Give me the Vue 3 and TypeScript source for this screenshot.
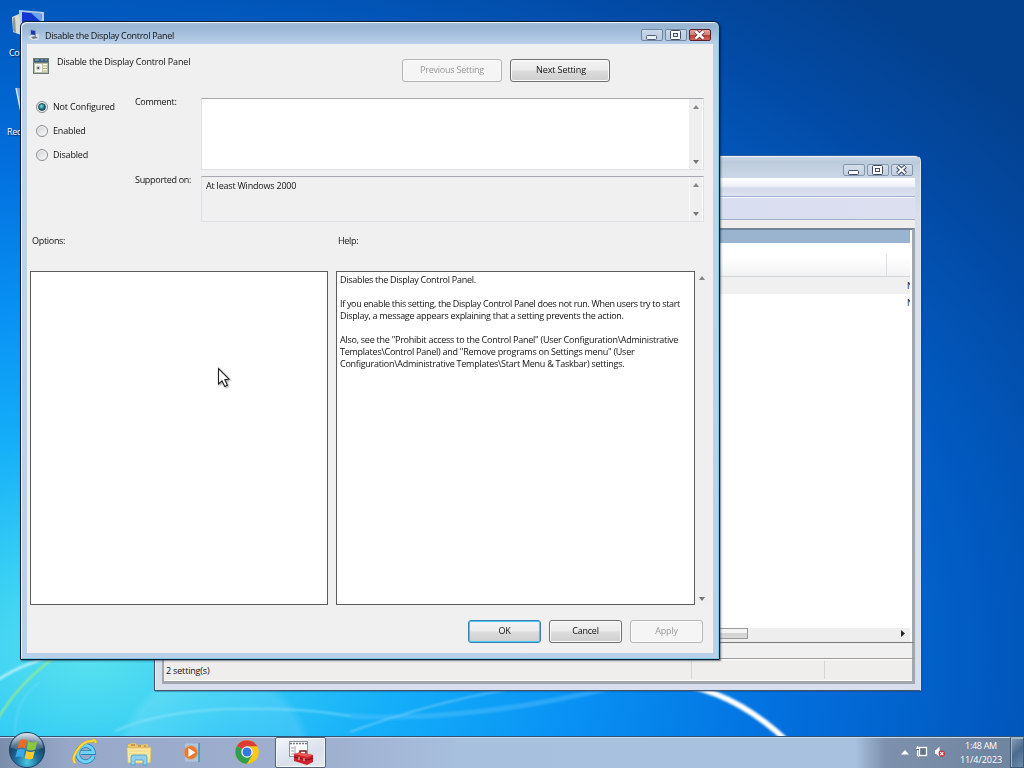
<script setup lang="ts">
import { ref } from 'vue'

type State = 'Not Configured' | 'Enabled' | 'Disabled'
const states: State[] = ['Not Configured', 'Enabled', 'Disabled']
const selected = ref<State>('Not Configured')

const helpLines: string[] = [
  'Disables the Display Control Panel.',
  '',
  'If you enable this setting, the Display Control Panel does not run. When users try to start',
  'Display, a message appears explaining that a setting prevents the action.',
  '',
  'Also, see the "Prohibit access to the Control Panel" (User Configuration\\Administrative',
  'Templates\\Control Panel) and "Remove programs on Settings menu" (User',
  'Configuration\\Administrative Templates\\Start Menu & Taskbar) settings.',
]
</script>

<template>
  <div class="desktop">
    <svg class="wallpaper" viewBox="0 0 1024 768" preserveAspectRatio="none">
      <defs>
        <radialGradient id="sky" gradientUnits="userSpaceOnUse" cx="0" cy="0" r="1" gradientTransform="translate(90 650) scale(1220 850)">
          <stop offset="0" stop-color="#5be2ee" />
          <stop offset="0.11" stop-color="#38cff4" />
          <stop offset="0.25" stop-color="#14aff9" />
          <stop offset="0.41" stop-color="#0890f4" />
          <stop offset="0.57" stop-color="#0270de" />
          <stop offset="0.73" stop-color="#015bc2" />
          <stop offset="0.87" stop-color="#024ba6" />
          <stop offset="1" stop-color="#03408d" />
        </radialGradient>
        <radialGradient id="orb" cx=".5" cy=".5" r=".5">
          <stop offset="0" stop-color="#fff" stop-opacity=".04" />
          <stop offset=".9" stop-color="#fff" stop-opacity=".12" />
          <stop offset="1" stop-color="#fff" stop-opacity="0" />
        </radialGradient>
        <filter id="soft"><feGaussianBlur stdDeviation="1.1" /></filter>
      </defs>
      <rect width="1024" height="768" fill="url(#sky)" />
      <circle cx="215" cy="765" r="100" fill="url(#orb)" />
      <g fill="none" filter="url(#soft)">
        <path d="M-5 682Q15 667 55 655" stroke="#d8f8fb" stroke-width="2.5" opacity=".8" />
        <path d="M-4 722Q18 682 62 652" stroke="#a4ee80" stroke-width="1.8" />
        <path d="M15 740Q13 700 40 682" stroke="#aeeefa" opacity=".4" />
        <path d="M115 731Q160 711 230 709T350 716" stroke="#a6ecff" stroke-width="2" opacity=".5" />
        <path d="M350 732Q430 703 505 690" stroke="#d5f5ff" stroke-width="1.2" opacity=".6" />
        <path d="M350 716Q470 722 610 688" stroke="#6bcaff" stroke-width="5" opacity=".35" />
        <path d="M690 686Q742 698 788 742" stroke="#fff" stroke-width="5.5" />
      </g>
    </svg>

    <div class="shortcut computer">
      <svg width="34" height="34" viewBox="0 0 34 34">
        <path d="M9 4L35 6 33 27 9 23z" fill="#b6cbe5" />
        <path d="M12 6L32 8 30 22 12 20z" fill="#1135cf" />
        <path d="M20 6L32 8 31 16z" fill="#6aa2ef" />
        <path d="M2 11L9 8 11 29 3 26z" fill="#d9dcd5" />
        <path d="M3 12L5 11 6 27 3 25z" fill="#92999b" />
      </svg>
      <span>Computer</span>
    </div>
    <div class="shortcut bin">
      <svg width="34" height="34" viewBox="0 0 34 34">
        <path d="M4 2H30L26 30H9z" fill="#8db8e8" opacity=".75" />
        <path d="M4 2L9 26" stroke="#d5eaff" stroke-width="1.4" />
      </svg>
      <span>Recycle Bin</span>
    </div>

    <section class="window console">
      <div class="caption">
        <div class="winbtns">
          <i class="wb"><svg viewBox="0 0 22 12"><rect x="5.5" y="6.5" width="10" height="4" rx="1" fill="#fff" stroke="#414d68" /></svg></i>
          <i class="wb"><svg viewBox="0 0 22 12"><rect x="5.5" y="1.5" width="10" height="9" rx="1" fill="#fff" stroke="#414d68" /><rect x="8.5" y="4.5" width="4" height="3" fill="#fff" stroke="#414d68" /></svg></i>
          <i class="wb"><svg viewBox="0 0 22 12"><path d="M6.5 2.3L14.5 9.6M14.5 2.3L6.5 9.6" stroke="#414d68" stroke-width="4.2" /><path d="M6.8 2.6L14.2 9.3M14.2 2.6L6.8 9.3" stroke="#fff" stroke-width="2" /></svg></i>
        </div>
      </div>
      <div class="menubar"></div>
      <div class="toolbar"></div>
      <div class="strip"></div>
      <div class="pane">
        <div class="band"></div>
        <div class="columns"><span></span></div>
        <div class="entry shaded"><span>No</span></div>
        <div class="entry"><span>No</span></div>
        <div class="blank"></div>
        <div class="hscroll">
          <div class="thumb"></div>
          <svg width="4" height="7" viewBox="0 0 4 7"><path d="M0 0L4 3.5 0 7z" fill="#222" /></svg>
        </div>
      </div>
      <div class="tabs"></div>
      <div class="status"><span>2 setting(s)</span><i></i><i></i></div>
    </section>

    <section class="window dialog">
      <header class="caption">
        <svg class="capicon" width="12" height="12" viewBox="0 0 12 12">
          <path d="M2 0L8 1 8 7 2 6z" fill="#93a5c6" />
          <path d="M3 1.2L7.2 2V6L3 5.2z" fill="#1b35b3" />
          <path d="M0 8L4 6 11 8 10 11 4 11z" fill="#dfe4e8" />
          <path d="M3 8L8 7 10 9 5 10z" fill="#6c7689" />
          <path d="M8 5H11V8H8z" fill="#d6dce2" />
        </svg>
        <span class="captext">Disable the Display Control Panel</span>
        <div class="winbtns">
          <i class="wb"><svg viewBox="0 0 22 12"><rect x="5.5" y="6.5" width="10" height="4" rx="1" fill="#e8eff5" stroke="#4d6077" /></svg></i>
          <i class="wb"><svg viewBox="0 0 22 12"><rect x="5.5" y="1.5" width="10" height="9" rx="1" fill="#fff" stroke="#414d68" /><rect x="8.5" y="4.5" width="4" height="3" fill="#dfe9f4" stroke="#414d68" /></svg></i>
          <i class="wb close"><svg viewBox="0 0 22 12"><path d="M6.5 2.3L14.5 9.6M14.5 2.3L6.5 9.6" stroke="#6e3035" stroke-width="4.2" /><path d="M6.5 2.3L14.5 9.6M14.5 2.3L6.5 9.6" stroke="#fff" stroke-width="2.6" /></svg></i>
        </div>
      </header>

      <div class="client">
        <div class="head">
          <svg class="polIcon" width="16" height="16" viewBox="0 0 16 16">
            <rect width="16" height="16" fill="#6b7a78" />
            <rect x="1" y="1" width="14" height="3" fill="#3d5f80" />
            <path d="M2 2H6M8 2H10M12 2H14" stroke="#8ebcbc" />
            <rect x="1" y="5" width="14" height="10" fill="#b8bda5" />
            <rect x="2" y="6" width="7" height="8" fill="#f8f8ee" />
            <circle cx="5.2" cy="10" r="2.4" fill="#cdd3c9" />
            <circle cx="5.2" cy="10" r="1" fill="#3c4d4d" />
            <rect x="10" y="6" width="4" height="8" fill="#fffde2" />
            <path d="M10 8H14M10 10.5H14M10 13H14" stroke="#9d9b64" stroke-width=".8" />
          </svg>
          <span class="title">Disable the Display Control Panel</span>
          <div class="nav">
            <button class="btn wide" disabled>Previous Setting</button>
            <button class="btn wide next">Next Setting</button>
          </div>
        </div>

        <div class="form">
          <div class="radios">
            <label v-for="s in states" :key="s" @click="selected = s">
              <span class="radio" :class="{ on: selected === s }"></span>{{ s }}
            </label>
          </div>
          <div class="labels"><span>Comment:</span><span>Supported on:</span></div>
          <div class="fields">
            <div class="field comment">
              <span></span>
              <div class="vs"><i class="up"></i><i class="down"></i></div>
            </div>
            <div class="field supported">
              <span>At least Windows 2000</span>
              <div class="vs"><i class="up"></i><i class="down"></i></div>
            </div>
          </div>
        </div>

        <div class="heads"><span>Options:</span><span>Help:</span></div>
        <div class="panels">
          <div class="box options"></div>
          <div class="box help">
            <p v-for="(line, i) in helpLines" :key="i" :class="{ tight: i === 2, loose: i > 4 }">{{ line }}</p>
          </div>
          <div class="vs bare"><i class="up"></i><i class="down"></i></div>
        </div>

        <div class="actions">
          <button class="btn primary">OK</button>
          <button class="btn">Cancel</button>
          <button class="btn" disabled>Apply</button>
        </div>
      </div>
    </section>

    <footer class="taskbar">
      <svg class="start" width="38" height="38" viewBox="0 0 38 38">
        <defs>
          <radialGradient id="ball" cx=".5" cy=".85" r=".8">
            <stop offset="0" stop-color="#4ccbe4" />
            <stop offset=".4" stop-color="#1c6f9c" />
            <stop offset=".75" stop-color="#1b4368" />
            <stop offset="1" stop-color="#6d93ad" />
          </radialGradient>
          <linearGradient id="gloss" x1="0" y1="0" x2="0" y2="1">
            <stop offset="0" stop-color="#fff" stop-opacity=".7" />
            <stop offset="1" stop-color="#fff" stop-opacity=".08" />
          </linearGradient>
        </defs>
        <circle cx="19" cy="19" r="17.6" fill="url(#ball)" stroke="#1f4160" />
        <path d="M3 17A16 15 0 0 1 35 17Q19 23 3 17z" fill="url(#gloss)" />
        <path d="M11.9 9.5Q15.5 7.2 19 9.5L17.4 17.6Q13.6 15.4 9.6 17.6z" fill="#ee6a24" />
        <path d="M20.2 10.2Q24.4 12.6 29.4 10.5L27.2 18.4Q22.7 20.6 18.6 18.2z" fill="#8cc63c" />
        <path d="M9.2 19Q13 16.8 17 19.1L15.3 26.6Q11.4 24.4 7.3 26.4z" fill="#3ea7e6" />
        <path d="M18.3 19.7Q22.3 22 26.8 19.9L24.8 27.4Q20.6 29.4 16.6 27.2z" fill="#fdc92b" />
      </svg>

      <div class="slot ie">
        <svg width="26" height="26" viewBox="0 0 26 26">
          <path d="M21.3 17A8 8 0 1 1 21.6 13.6H9" fill="none" stroke="#2584bd" stroke-width="4.6" />
          <path d="M21.3 17A8 8 0 1 1 21.6 13.6H9" fill="none" stroke="#6fd3f5" stroke-width="3" />
          <path d="M3.5 24Q-1 21 5 11.5T20 2Q24 0 23.5 4" fill="none" stroke="#d3a514" stroke-width="3" />
          <path d="M3.5 24Q-1 21 5 11.5T20 2Q24 0 23.5 4" fill="none" stroke="#fbdc48" stroke-width="2" />
        </svg>
      </div>
      <div class="slot explorer">
        <svg width="26" height="26" viewBox="0 0 26 26">
          <path d="M2 4L9 3 11 5 22 4V7H25V22H2z" fill="#e6c766" />
          <path d="M1 8H25L24 23H2z" fill="#f8e9a4" stroke="#d8bd64" stroke-width=".7" />
          <path d="M5 5H9M12 6H15M18 6H20" stroke="#cf5740" />
          <path d="M3 11H23M3 14H23" stroke="#eed883" />
          <path d="M5 25V17Q5 15 7 15H19Q21 15 21 17V25H17V20H9V25z" fill="#8fd0ed" stroke="#4d9dc8" stroke-width=".8" />
        </svg>
      </div>
      <div class="slot media">
        <svg width="22" height="22" viewBox="0 0 22 22">
          <rect x="3" y="1.5" width="14" height="18" fill="#bcd7e6" opacity=".6" />
          <path d="M17 1V20" stroke="#3c92b8" stroke-width="1.4" />
          <path d="M20 2V19" stroke="#75bed7" />
          <circle cx="8.8" cy="10.5" r="6.8" fill="#e8782c" stroke="#d8a17d" />
          <path d="M6.4 5.9L13.3 10.5 6.4 15.1z" fill="#fff" />
        </svg>
      </div>
      <div class="slot chrome">
        <svg width="24" height="24" viewBox="0 0 24 24">
          <circle cx="12" cy="12" r="11.8" fill="#fbc91b" />
          <path d="M12 12L1.8 6A11.8 11.8 0 0 1 22.3 6.2H12z" fill="#dc3d30" />
          <path d="M1.8 6.1A11.8 11.8 0 0 0 12 23.8L17.2 15 12 12z" fill="#30a04f" />
          <circle cx="12" cy="12" r="5.7" fill="#fff" />
          <circle cx="12" cy="12" r="4.5" fill="#3379e5" />
        </svg>
      </div>
      <div class="active">
        <svg width="26" height="26" viewBox="0 0 26 26">
          <rect x="1.5" y="1.5" width="18" height="15" fill="#fdfdfd" stroke="#8b939d" />
          <path d="M2 3.5H19" stroke="#6f7a88" stroke-width="1.4" stroke-dasharray="2 1" />
          <path d="M7 6V16M3 8H6M3 11H6M3 14H6" stroke="#a0a6af" />
          <path d="M12 14V11H18V15" fill="none" stroke="#6c1a1d" stroke-width="1.5" />
          <path d="M6 14L11 12.5 25 15V22L19 25 6 21z" fill="#c9242c" />
          <path d="M6 14L11 12.5 25 15 19 17z" fill="#ee5a57" />
          <path d="M6 17L19 20 25 18" fill="none" stroke="#7e0f17" />
          <path d="M11 17V20M16 18V21" stroke="#f5d8c8" />
        </svg>
      </div>

      <div class="tray">
        <svg width="8" height="5" viewBox="0 0 8 5"><path d="M0 4.5L4 0 8 4.5z" fill="#fff" /></svg>
        <svg width="12" height="12" viewBox="0 0 12 12"><rect x="3.5" y="1.5" width="7" height="8" fill="#63758e" stroke="#fff" stroke-width="1.3" /><path d="M0 2.5H3.4M1.6 0V9Q1.6 10.5 3.2 10.5" fill="none" stroke="#fff" stroke-width="1.3" /><path d="M.5 3.5H3" stroke="#26364a" stroke-width=".8" /></svg>
        <svg width="12" height="12" viewBox="0 0 12 12"><path d="M1 4H2L5.5 .5V10.5L2 8H1z" fill="#fff" /><circle cx="7.8" cy="7.6" r="3.2" fill="#d3323a" /><path d="M6.3 6.1L9.3 9.1M9.3 6.1L6.3 9.1" stroke="#fff" stroke-width="1.1" /></svg>
      </div>
      <div class="clock"><span>1:48 AM</span><span class="date">11/4/2023</span></div>
      <div class="peek"></div>
    </footer>

    <svg class="pointer" width="18" height="24" viewBox="0 0 18 24">
      <path d="M1.5 1.5V17L5 13.8 7.8 19.5 10.4 18.3 7.8 12.7 12 12.2z" fill="#fff" stroke="#222" stroke-width="1.1" />
    </svg>
  </div>
</template>

<style>
html,
body {
  margin: 0;
  overflow: hidden;
}
</style>

<style scoped>
.desktop {
  position: relative;
  width: 1024px;
  height: 768px;
  overflow: hidden;
  background: #0270de;
  font: 9px/12px 'Open Sans', 'Noto Sans', sans-serif;
  letter-spacing: -0.3px;
  color: #111;
  white-space: nowrap;
}
.desktop *,
.desktop *::before {
  box-sizing: border-box;
}
svg {
  display: block;
  flex: none;
}
.wallpaper {
  position: absolute;
  inset: 0;
  width: 1024px;
  height: 768px;
}
.shortcut {
  position: absolute;
  display: flex;
  flex-direction: column;
  width: 60px;
  color: #fff;
  text-shadow: 1px 1px 1px #002050;
}
.computer {
  left: 10px;
  top: 6px;
  gap: 7px;
}
.bin {
  left: 12px;
  top: 86px;
  gap: 6px;
}
.computer span {
  margin-left: -1px;
}
.bin span {
  margin-left: -5px;
}

/* window frames */
.window {
  position: absolute;
  display: flex;
  flex-direction: column;
}
.caption {
  display: flex;
  align-items: flex-start;
  flex: none;
}
.winbtns {
  display: flex;
  gap: 2px;
  margin-left: auto;
}
.wb {
  width: 22px;
  height: 12px;
  border: 1px solid #8496ae;
  border-radius: 2px;
  background: linear-gradient(#dfe7f1aa, #c0ccdc88);
}
.wb svg {
  width: 22px;
  height: 12px;
  margin: -1px;
}
.console {
  left: 154px;
  top: 155px;
  width: 767px;
  height: 536px;
  padding: 0 5px 6px 7px;
  border: 1px solid #43536b;
  border-top-color: #2d5f9e;
  border-right-color: #dfe6f1;
  border-radius: 6px 6px 0 0;
  background: linear-gradient(#cdd9e8 0, #bccbdc 6px, #ccd7e5 22px, #d8dfec 60px, #d8dfec);
  box-shadow: inset 1px 1px #edf3fa, 1px 1px 1px #1d3d6d66;
}
.console .caption {
  height: 22px;
  padding: 8px 2px 0 0;
}
.menubar {
  flex: none;
  height: 19px;
  border-bottom: 1px solid #a3b0cb;
  background: linear-gradient(#fff, #edf1f8 8px, #d4daea 10px, #dbe1f0);
}
.toolbar {
  flex: none;
  height: 23px;
  border-top: 1px solid #f7f9fd;
  border-bottom: 1px solid #a6b0c8;
  background: linear-gradient(90deg, #d3dbef, #dbdff0);
}
.strip {
  flex: none;
  height: 8px;
  background: #f0eeec;
}
.pane {
  flex: none;
  display: flex;
  flex-direction: column;
  height: 415px;
  padding-right: 2px;
  border-top: 2px solid #74859a;
  border-right: 3px solid #a1a6af;
  border-bottom: 1px solid #777;
  background: #fff;
}
.band {
  height: 13px;
  background: #9ab4d0;
}
.columns {
  display: flex;
  justify-content: flex-end;
  height: 34px;
  padding-top: 11px;
  border-bottom: 1px solid #d5d5d5;
  background: linear-gradient(#fff 45%, #f1f2f3);
}
.columns span {
  width: 24px;
  border-left: 1px solid #dcdee0;
}
.entry {
  display: flex;
  justify-content: flex-end;
  align-items: center;
  height: 17px;
}
.entry span {
  width: 3px;
  overflow: hidden;
}
.shaded {
  background: #f0f0f0;
}
.blank {
  flex: 1;
}
.hscroll {
  display: flex;
  align-items: center;
  height: 14px;
  padding: 0 5px 3px 0;
  background: #eee;
}
.thumb {
  width: 586px;
  height: 11px;
  margin-right: auto;
  border: 1px solid #999;
  background: linear-gradient(#f5f5f5 45%, #d2d2d2 50%, #dadada);
}
.tabs {
  flex: none;
  height: 16px;
  border-right: 3px solid #a1a6af;
  border-bottom: 1px solid #999;
  background: #f0f0f0;
}
.status {
  flex: 1;
  display: flex;
  align-items: center;
  padding-left: 2px;
  border: 3px solid #a1a6af;
  border-top: 0;
  border-left-width: 2px;
  background: #f0eeed;
  box-shadow: inset 0 1px #fff, inset 0 -1px #fff;
}
.status span {
  flex: 1;
  padding-top: 2px;
  letter-spacing: -0.18px;
}
.status i {
  width: 133px;
  height: 18px;
  border-left: 1px solid #d5d5d5;
}
.status i:last-child {
  width: 88px;
}

.dialog {
  left: 20px;
  top: 21px;
  width: 700px;
  height: 639px;
  padding: 0 6px 6px;
  border: 1px solid #0b1c30;
  border-radius: 6px 6px 0 0;
  background: linear-gradient(#a8c1dc, #97b4d2 4px, #b9d0e9 22px, #bdd4ec 130px, #b8d0ea);
  box-shadow: inset 1px 1px #eaf5fe, inset -1px -1px #7cc9e8, 1px 1px 2px #00102a88;
}
.dialog .caption {
  height: 22px;
  padding: 7px 2px 0 2px;
}
.captext {
  margin: 1px 0 0 5px;
}
.capicon {
  margin-left: -1px;
}
.dialog .wb {
  border-color: #71879f;
}
.dialog .wb.close {
  border-color: #5a2028;
  background: linear-gradient(#e2a59c, #d0837b 45%, #b83d34 50%, #d0685a);
}
.client {
  flex: 1;
  display: flex;
  flex-direction: column;
  padding: 0 9px 0 3px;
  background: #f0f0f0;
}

/* dialog content */
.head {
  display: flex;
  align-items: flex-start;
  height: 54px;
  padding: 14px 94px 0 3px;
}
.title {
  margin: -2px 0 0 8px;
  letter-spacing: -0.17px;
}
.nav {
  display: flex;
  gap: 8px;
  margin: 1px 0 0 auto;
}
.btn {
  width: 73px;
  height: 23px;
  padding: 0 0 2px;
  border: 1px solid #707070;
  border-radius: 3px;
  background: linear-gradient(#f3f3f3, #ebebeb 48%, #dcdcdc 52%, #cecece);
  box-shadow: inset 0 0 0 1px #fbfbfb;
  color: #111;
  font: inherit;
  letter-spacing: inherit;
}
.wide {
  width: 100px;
  letter-spacing: -0.23px;
}
.next {
  padding-left: 2px;
  letter-spacing: -0.1px;
}
.btn:disabled {
  border-color: #b3b5b7;
  background: #f5f5f5;
  color: #989898;
}
.primary {
  border-color: #3c7fb1;
  box-shadow: inset 0 0 0 1px #45c8f0;
}
.form {
  display: flex;
  height: 124px;
}
.radios {
  width: 105px;
  padding: 3px 0 0 6px;
  letter-spacing: -0.17px;
}
.radios label {
  display: flex;
  align-items: center;
  gap: 5px;
  height: 12px;
  margin-bottom: 12px;
}
.radio {
  display: grid;
  place-items: center;
  width: 12px;
  height: 12px;
  border: 1px solid #8a8d90;
  border-radius: 50%;
  background: linear-gradient(135deg, #cdd0d2, #fafafa);
  box-shadow: inset 0 0 0 1px #f3f3f3;
}
.radio.on::before {
  content: '';
  width: 8px;
  height: 8px;
  border: 1px solid #174f62;
  border-radius: 50%;
  background: radial-gradient(circle at 40% 35%, #8fe0e6, #14687a 60%, #0c4a5d);
}
.labels {
  display: flex;
  flex-direction: column;
  gap: 66px;
  width: 66px;
  margin-top: -2px;
}
.fields {
  display: flex;
  flex-direction: column;
  gap: 6px;
  width: 503px;
}
.field {
  display: flex;
  justify-content: space-between;
  border: 1px solid #e0e1e4;
  border-top-color: #a6a8ad;
  padding: 0 0 0 4px;
}
.comment {
  height: 72px;
  background: #fff;
}
.supported {
  height: 46px;
}
.supported span {
  margin-top: 3px;
  letter-spacing: -0.21px;
}
.vs {
  display: flex;
  flex-direction: column;
  justify-content: space-between;
  align-items: center;
  width: 14px;
  padding: 6px 0 5px;
  border-right: 1px solid #fff;
  background: #efefef;
}
.supported .vs {
  border-left: 1px solid #fafafa;
}
.up,
.down {
  border: 3.5px solid transparent;
}
.up {
  border-top: 0;
  border-bottom: 4px solid #858585;
}
.down {
  border-bottom: 0;
  border-top: 4px solid #757575;
}
.heads {
  display: flex;
  height: 49px;
  padding: 13px 0 0 2px;
}
.heads span {
  width: 306px;
}
.panels {
  display: flex;
  height: 334px;
}
.box {
  border: 1px solid #5c5c5c;
  background: #fff;
}
.options {
  width: 298px;
  margin-right: 8px;
}
.help {
  width: 359px;
  padding: 2px 3px;
}
.help p {
  height: 12px;
  margin: 0;
  letter-spacing: -0.28px;
}
.help .tight {
  letter-spacing: -0.325px;
}
.help .loose {
  letter-spacing: -0.25px;
}
.vs.bare {
  padding: 5px 0 4px;
  margin-right: -9px;
  border: 0;
}
.actions {
  display: flex;
  justify-content: flex-end;
  gap: 8px;
  padding: 15px 1px 0 0;
  letter-spacing: -0.2px;
}

/* taskbar */
.taskbar {
  position: absolute;
  left: 0;
  bottom: 0;
  display: flex;
  width: 1024px;
  height: 32px;
  border-top: 1px solid #34526f;
  background: linear-gradient(90deg, #7b8dac, #97a8c8 70px, #a0b1d0 340px, #a7c0dd 460px, #a7c1de 855px, #7d91ad 885px, #70859f 1000px);
  box-shadow: inset 0 1px #c8dbec;
}
.start {
  margin: -6px 0 0 8px;
}
.slot {
  display: flex;
  align-items: center;
  justify-content: center;
  width: 54px;
}
.ie {
  margin-left: 12px;
}
.ie svg,
.chrome svg {
  margin-top: -2px;
}
.active {
  display: flex;
  align-items: center;
  justify-content: center;
  width: 51px;
  height: 31px;
  margin-left: 1px;
  border: 1px solid #53657e;
  border-radius: 2px;
  background: linear-gradient(160deg, #f3f6fa, #d8e0eb 60%, #e6ebf2);
  box-shadow: inset 0 0 0 1px #f7fafd;
}
.tray {
  display: flex;
  align-items: center;
  gap: 6px;
  margin-left: auto;
  padding-bottom: 1px;
}
.tray svg:first-child {
  margin-right: 1px;
}
.clock {
  display: flex;
  flex-direction: column;
  justify-content: center;
  width: 61px;
  margin-left: 3px;
  padding-left: 3px;
  text-align: center;
  line-height: 14px;
  color: #fff;
}
.date {
  letter-spacing: -0.05px;
}
.peek {
  width: 14px;
  border: 1px solid #3e5876;
  border-top-color: #9db4ca;
  background: linear-gradient(135deg, #8ba0b8, #4b6a8e 50%, #6f8cab);
  box-shadow: inset 1px 1px #a3b7cb;
}
.pointer {
  position: absolute;
  left: 217px;
  top: 367px;
  filter: drop-shadow(1px 1px 1px #0006);
}
</style>
